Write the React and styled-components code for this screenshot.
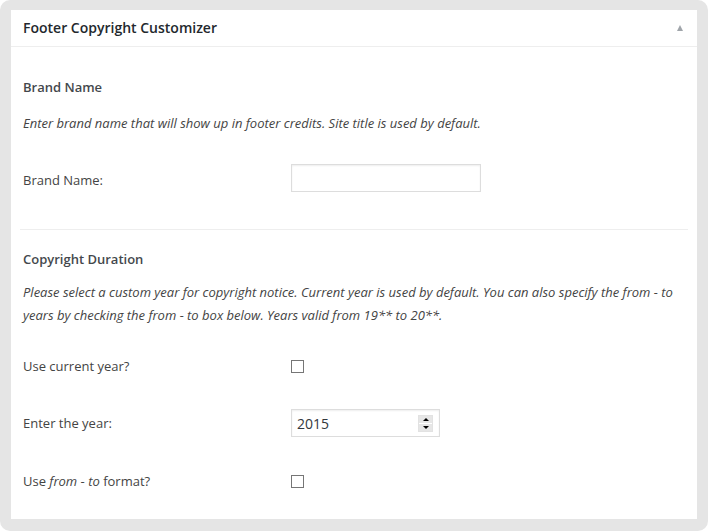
import React from "react";
import styled, { createGlobalStyle } from "styled-components";

const Global = createGlobalStyle`
  html, body { margin: 0; padding: 0; background: #fff; }
  body { font-family: "Open Sans", "Noto Sans", sans-serif; color: #444; }
  * { box-sizing: border-box; }
`;

const Frame = styled.div`
  width: 708px;
  height: 531px;
  background: #e5e5e5;
  border-radius: 10px;
  padding: 10px 10px 11px 10px;
`;

const Panel = styled.div`
  height: 100%;
  background: #fff;
  border: 1px solid #e5e5e5;
  border-top: none;
  display: flex;
  flex-direction: column;
`;

const Header = styled.div`
  height: 37px;
  border-bottom: 1px solid #eee;
  display: flex;
  align-items: center;
  justify-content: space-between;
  padding: 0 14px 0 12px;
`;

const Title = styled.h2`
  margin: 0;
  font-size: 14px;
  font-weight: 600;
  color: #23282d;
  line-height: 20px;
`;

const Toggle = styled.span`
  width: 0;
  height: 0;
  border-left: 3.5px solid transparent;
  border-right: 3.5px solid transparent;
  border-bottom: 6px solid #a0a5aa;
`;

const Inside = styled.div`
  padding: 0 12px;
`;

const SectionTitle = styled.h3`
  margin: ${(p) => p.$top}px 0 0;
  font-size: 13px;
  font-weight: 600;
  color: #23282d;
  line-height: 20px;
  opacity: 0.85;
`;

const Desc = styled.p`
  margin: ${(p) => p.$top}px 0 0;
  font-size: 13px;
  font-style: italic;
  line-height: 23px;
  color: #444;
`;

const Row = styled.div`
  display: grid;
  grid-template-columns: 268px 1fr;
  align-items: center;
  height: 28px;
  margin-top: ${(p) => p.$top}px;
`;

const Label = styled.label`
  font-size: 13px;
  line-height: 20px;
  color: #444;
  position: relative;
  top: ${(p) => p.$shift || 0}px;
`;

const TextInput = styled.input`
  width: ${(p) => p.$w}px;
  height: 28px;
  border: 1px solid #ddd;
  box-shadow: inset 0 1px 2px rgba(0, 0, 0, 0.07);
  background: #fff;
  padding: 0 5px;
  font-family: "Open Sans", sans-serif;
  font-size: 14px;
  color: #32373c;
  outline: none;
`;

const NumberBox = styled.div`
  width: 149px;
  height: 28px;
  border: 1px solid #ddd;
  box-shadow: inset 0 1px 2px rgba(0, 0, 0, 0.07);
  background: #fff;
  display: flex;
  align-items: center;
  padding: 0 6px 0 5px;
`;

const NumberText = styled.input`
  flex: 1;
  min-width: 0;
  border: none;
  background: transparent;
  outline: none;
  padding: 0;
  font-family: "Open Sans", sans-serif;
  font-size: 14px;
  color: #32373c;
`;

const Spinner = styled.span`
  width: 15px;
  height: 17px;
  display: flex;
  flex-direction: column;
  gap: 1px;
  background: #fff;
  border: 1px solid #e2e2e2;
`;

const SpinHalf = styled.span`
  flex: 1;
  background: #e6e6e6;
  display: flex;
  align-items: center;
  justify-content: center;
  &::after {
    content: "";
    width: 0;
    height: 0;
    border-left: 3px solid transparent;
    border-right: 3px solid transparent;
    ${(p) => (p.$down ? "border-top: 3px solid #000;" : "border-bottom: 3px solid #000;")}
  }
`;

const Check = styled.input`
  appearance: none;
  -webkit-appearance: none;
  width: 13px;
  height: 13px;
  margin: 0;
  border: 1px solid #767676;
  border-radius: 0;
  background: #fff;
  display: block;
`;

const Divider = styled.hr`
  border: none;
  border-top: 1px solid #eee;
  margin: 37px -3px 0 -3px;
`;

export default function App() {
  return (
    <>
      <Global />
      <Frame>
        <Panel>
          <Header>
            <Title>Footer Copyright Customizer</Title>
            <Toggle />
          </Header>
          <Inside>
            <SectionTitle $top={30}>Brand Name</SectionTitle>
            <Desc $top={15}>
              Enter brand name that will show up in footer credits. Site title is used by default.
            </Desc>
            <Row $top={29}>
              <Label $shift={2}>Brand Name:</Label>
              <div>
                <TextInput $w={190} type="text" defaultValue="" />
              </div>
            </Row>
            <Divider />
            <SectionTitle $top={19}>Copyright Duration</SectionTitle>
            <Desc $top={12}>
              Please select a custom year for copyright notice. Current year is used by default. You can also specify the from - to years by checking the from - to box below. Years valid from 19** to 20**.
            </Desc>
            <Row $top={25}>
              <Label>Use current year?</Label>
              <div>
                <Check type="checkbox" />
              </div>
            </Row>
            <Row $top={29}>
              <Label>Enter the year:</Label>
              <NumberBox>
                <NumberText type="text" defaultValue="2015" />
                <Spinner>
                  <SpinHalf />
                  <SpinHalf $down />
                </Spinner>
              </NumberBox>
            </Row>
            <Row $top={30}>
              <Label>
                Use <i>from</i> - <i>to</i> format?
              </Label>
              <div>
                <Check type="checkbox" />
              </div>
            </Row>
          </Inside>
        </Panel>
      </Frame>
    </>
  );
}
